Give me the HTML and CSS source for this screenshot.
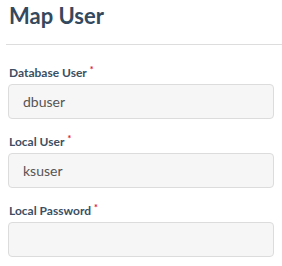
FILE: index.html
```html
<!DOCTYPE html>
<html>
<head>
<meta charset="utf-8">
<link rel="stylesheet" href="styles.css">
</head>
<body>
<div class="modal">
  <div class="modal-header">
    <h2 class="title">Map User</h2>
  </div>
  <div class="modal-body">
    <div class="field">
      <label class="label">Database User<span class="req">*</span></label>
      <input class="input" type="text" value="dbuser">
    </div>
    <div class="field">
      <label class="label">Local User<span class="req">*</span></label>
      <input class="input" type="text" value="ksuser">
    </div>
    <div class="field">
      <label class="label">Local Password<span class="req">*</span></label>
      <input class="input" type="password" value="">
    </div>
  </div>
</div>
</body>
</html>
```
FILE: styles.css
```css
* { box-sizing: border-box; }
html, body { margin: 0; padding: 0; background: #fff; }
body { font-family: Lato, "Open Sans", sans-serif; color: #34495e; }
.modal { width: 282px; }
.modal-header {
  margin-left: 6px;
  padding: 3px 0 0 3px;
  height: 45px;
  border-bottom: 1px solid #dddddd;
}
.title {
  margin: 0;
  font-size: 22px;
  font-weight: 700;
  line-height: 26px;
  color: #34495e;
}
.modal-body {
  padding: 21px 8px 0 8px;
  display: flex;
  flex-direction: column;
  gap: 16px;
}
.field { display: flex; flex-direction: column; }
.label {
  font-size: 12px;
  font-weight: 700;
  line-height: 14px;
  padding-left: 1px;
  margin-bottom: 4px;
  color: #3b4f63;
}
.req {
  color: #e0102b;
  font-size: 9px;
  vertical-align: top;
  position: relative;
  top: -3px;
  margin-left: 3px;
}
.input {
  width: 266px;
  height: 35px;
  border: 1px solid #dcdcdc;
  border-radius: 4px;
  background: #f6f6f6;
  padding: 0 14px;
  font-family: Lato, sans-serif;
  font-size: 14px;
  color: #555;
  outline: none;
}
```
